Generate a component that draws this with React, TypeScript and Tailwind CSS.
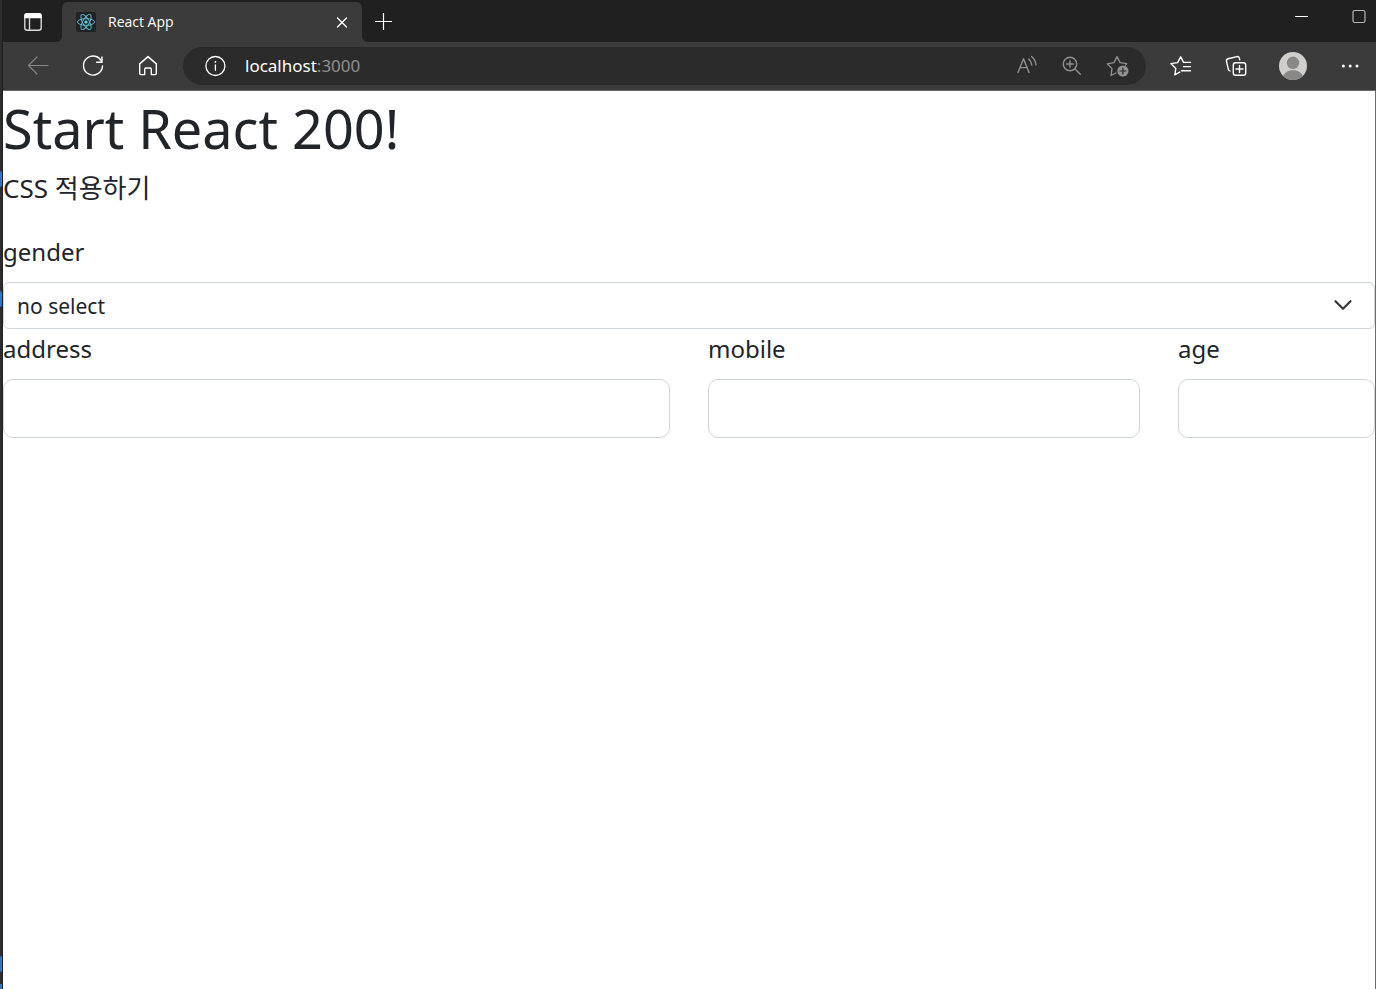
import type { ReactNode } from "react";

function Icon({ size = 24, className, children }: { size?: number; className?: string; children: ReactNode }) {
  return (
    <svg
      width={size}
      height={size}
      viewBox={`0 0 ${size} ${size}`}
      fill="none"
      stroke="currentColor"
      strokeWidth="1.4"
      strokeLinecap="round"
      strokeLinejoin="round"
      className={className}
      aria-hidden
    >
      {children}
    </svg>
  );
}

function ToolButton({ label, className = "", children }: { label: string; className?: string; children: ReactNode }) {
  return (
    <button type="button" aria-label={label} className={`flex h-8 w-8 shrink-0 items-center justify-center ${className}`}>
      {children}
    </button>
  );
}

function ReactLogo() {
  return (
    <svg width="20" height="20" viewBox="0 0 20 20" fill="none" className="shrink-0" aria-hidden>
      <rect width="20" height="20" rx="2" fill="#222222" />
      <g stroke="#61c3de" strokeWidth="0.9">
        <ellipse cx="10" cy="10" rx="8.6" ry="3.3" />
        <ellipse cx="10" cy="10" rx="8.6" ry="3.3" transform="rotate(60 10 10)" />
        <ellipse cx="10" cy="10" rx="8.6" ry="3.3" transform="rotate(120 10 10)" />
      </g>
      <circle cx="10" cy="10" r="1.6" fill="#61dafb" />
    </svg>
  );
}

function TabStrip() {
  return (
    <div className="flex h-[42px] bg-[#3b3b3b] text-white">
      <div className="flex w-[59px] shrink-0 items-center justify-center rounded-br-md bg-[#202020] pt-0.5">
        <ToolButton label="Tab actions">
          <Icon>
            <rect x="3.8" y="3.8" width="16.4" height="16.4" rx="2.5" stroke="#d8d8d8" />
            <path d="M4 5.5Q4 4 5.5 4H18.5Q20 4 20 5.5V7.5H4Z" fill="currentColor" />
            <path d="M8.5 8V20" stroke="#d8d8d8" />
          </Icon>
        </ToolButton>
      </div>
      <div className="w-[300px] shrink-0 bg-[#202020] pt-0.5">
        <div className="flex h-full items-center rounded-t-md bg-[#3b3b3b] pr-1 pl-3.5">
          <ReactLogo />
          <span className="ml-3 flex-1 text-[14px] leading-5">React App</span>
          <ToolButton label="Close tab">
            <Icon size={16}>
              <path d="M3.5 4L12.5 13M12.5 4L3.5 13" strokeWidth="1.3" />
            </Icon>
          </ToolButton>
        </div>
      </div>
      <div className="flex flex-1 justify-between rounded-bl-md bg-[#202020]">
        <ToolButton label="New tab" className="mt-1.5 ml-1.5">
          <Icon size={20}>
            <path d="M9.5 1V18M1 9.5H18" strokeWidth="1.2" strokeLinecap="butt" />
          </Icon>
        </ToolButton>
        <div className="flex gap-[25px] pr-px">
          <ToolButton label="Minimize">
            <Icon size={16}>
              <path d="M1 8.5H14" strokeWidth="1" strokeLinecap="butt" />
            </Icon>
          </ToolButton>
          <ToolButton label="Maximize">
            <Icon size={16}>
              <rect x="2" y="2.5" width="12" height="12" rx="1.8" stroke="#b8b8b8" strokeWidth="1.2" />
            </Icon>
          </ToolButton>
        </div>
      </div>
    </div>
  );
}

function AddressBar() {
  return (
    <div className="flex h-[38px] flex-1 items-center rounded-full bg-[#2b2b2b] pr-3 pl-4">
      <ToolButton label="Site information">
        <Icon>
          <circle cx="12.4" cy="12" r="9.5" strokeWidth="1.3" />
          <path d="M12.4 10.8V16.3" strokeWidth="1.3" />
          <circle cx="12.4" cy="7.9" r="0.9" fill="currentColor" stroke="none" />
        </Icon>
      </ToolButton>
      <p className="ml-3.5 flex-1 font-['Noto_Sans',sans-serif] text-[17px] leading-6">
        localhost<span className="text-[#8f8f8f]">:3000</span>
      </p>
      <div className="flex gap-3.5 text-[#919191]">
        <ToolButton label="Read aloud">
          <Icon>
            <path d="M4 18.5L9.5 4.8L15 18.5M5.9 13.6H13.1" />
            <path d="M14.8 5Q17.2 7.3 17.8 11M17.6 2.5Q21.6 6 22 11" />
          </Icon>
        </ToolButton>
        <ToolButton label="Zoom">
          <Icon>
            <circle cx="10" cy="10" r="6.7" />
            <path d="M15 15L20.3 20.3M10 6.7V13.3M6.7 10H13.3" />
          </Icon>
        </ToolButton>
        <ToolButton label="Add this page to favorites">
          <Icon>
            <path d="M10 19L5 21.5L6 14.6L1.2 9.8L8 8.6L11 2.6L14.1 8.6L20.8 9.6L19.6 11.2" strokeWidth="1.3" />
            <circle cx="16.9" cy="17" r="5.6" fill="currentColor" stroke="none" />
            <path d="M16.9 14V20M13.9 17H19.9" stroke="#2b2b2b" strokeWidth="1.2" />
          </Icon>
        </ToolButton>
      </div>
    </div>
  );
}

function Toolbar() {
  return (
    <div className="flex h-12 items-center bg-[#3b3b3b] pr-[11px] pl-[19px] text-white">
      <div className="mr-[19px] flex gap-[23px]">
        <ToolButton label="Back" className="text-[#858585]">
          <Icon>
            <path d="M22 11.5H2.5M11 3L2.5 11.5L11 20" strokeWidth="1.2" />
          </Icon>
        </ToolButton>
        <ToolButton label="Refresh">
          <Icon>
            <path d="M20.9 8.2A9.5 9.5 0 1 0 21.5 12M21 3V8.3H15.6" />
          </Icon>
        </ToolButton>
        <ToolButton label="Home">
          <Icon>
            <path d="M3.7 9.9L12 2.6L20.3 9.9V19.5Q20.3 20.6 19.2 20.6H15.3V15.2Q15.3 14 14.1 14H9.9Q8.7 14 8.7 15.2V20.6H4.8Q3.7 20.6 3.7 19.5Z" />
          </Icon>
        </ToolButton>
      </div>
      <AddressBar />
      <div className="ml-[19px] flex items-center gap-6">
        <ToolButton label="Favorites">
          <Icon>
            <path d="M10.8 18.1L5.8 20.8L6.8 14.5L1.9 9.6L8.6 8.6L11.7 2.8L14.6 8.4H21.5M14.5 12.6H21.5M12.5 16.8H21.5" />
          </Icon>
        </ToolButton>
        <ToolButton label="Collections">
          <Icon>
            <rect x="8.3" y="8.8" width="12.4" height="12.4" rx="2.2" />
            <path d="M14.5 11.5V18.5M11 15H18M5 17L4 16.4Q3.5 16 3.3 15.2L1.5 7.3Q1.1 5.3 3 4.8L12 2.6Q13.8 2.3 14.3 4.1L14.8 5.8" />
          </Icon>
        </ToolButton>
        <ToolButton label="Profile">
          <svg width="28" height="28" viewBox="0 0 28 28" aria-hidden>
            <circle cx="14" cy="14" r="14" fill="#d0cecb" />
            <circle cx="14" cy="10.8" r="6.2" fill="#8a8886" />
            <path d="M4.2 24C6 20 10 18.3 14 18.3S22 20 23.8 24A14 14 0 0 1 4.2 24Z" fill="#8a8886" />
          </svg>
        </ToolButton>
        <ToolButton label="Settings and more">
          <Icon>
            <g fill="currentColor" stroke="none">
              <circle cx="6.4" cy="12" r="1.5" />
              <circle cx="13.2" cy="12" r="1.5" />
              <circle cx="20" cy="12" r="1.5" />
            </g>
          </Icon>
        </ToolButton>
      </div>
    </div>
  );
}

function TextField({ id, className }: { id: string; className: string }) {
  return (
    <div className={`px-[19px] ${className}`}>
      <label htmlFor={id} className="mb-2.5 block leading-10">
        {id}
      </label>
      <input id={id} type="text" className="block h-[59px] w-full rounded-[10px] border border-[#ced4da] bg-white px-4" />
    </div>
  );
}

function Page() {
  return (
    <main className="flex-1 overflow-x-clip border-t border-r border-[#6b6b6b] bg-white font-['Noto_Sans','Noto_Sans_CJK_KR',sans-serif] text-[24px] text-[#212529]">
      <h1 className="text-[54px] leading-[74px]">Start React 200!</h1>
      <p className="mt-[3px] mb-6 text-[26px] leading-10">CSS 적용하기</p>
      <label htmlFor="gender" className="mb-2.5 block leading-10">
        gender
      </label>
      <div className="relative">
        <select
          id="gender"
          className="block h-[47px] w-full appearance-none rounded-md border border-[#ced4da] bg-white px-[13px] pt-0.5 text-[21px]"
        >
          <option>no select</option>
        </select>
        <svg
          width="20"
          height="20"
          viewBox="0 0 16 16"
          fill="none"
          className="pointer-events-none absolute top-[13px] right-[22px]"
          aria-hidden
        >
          <path d="M2 5L8 11L14 5" stroke="#343a40" strokeWidth="1.8" strokeLinecap="round" strokeLinejoin="round" />
        </svg>
      </div>
      <div className="-mx-[19px] flex">
        <TextField id="address" className="w-1/2" />
        <TextField id="mobile" className="w-1/3" />
        <TextField id="age" className="w-1/6" />
      </div>
    </main>
  );
}

// Sliver of the window lying behind the browser
function BackWindowEdge() {
  return (
    <div className="flex w-[3px] shrink-0 flex-col border-r border-[#202020] bg-[#2d2d2d]">
      <span className="mt-[171px] h-4 rounded-r-sm bg-[#3374c6]" />
      <span className="mt-[104px] h-4 rounded-r-sm bg-[#3374c6]" />
      <span className="mt-auto mb-3 h-4 rounded-r-sm bg-[#3374c6]" />
      <span className="h-[5px] bg-[#3374c6]" />
    </div>
  );
}

export default function App() {
  return (
    <div className="flex min-h-screen font-['Open_Sans','Noto_Sans',sans-serif]">
      <BackWindowEdge />
      <div className="flex min-w-0 flex-1 flex-col">
        <header>
          <TabStrip />
          <Toolbar />
        </header>
        <Page />
      </div>
    </div>
  );
}
